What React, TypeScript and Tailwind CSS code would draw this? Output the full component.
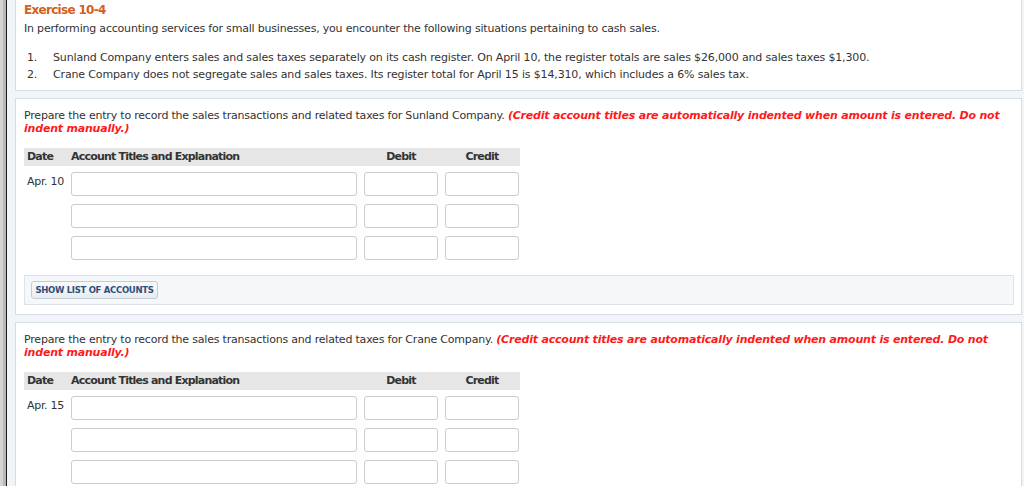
const font = "font-['DejaVu_Sans',Verdana,sans-serif]";

function EntryTable({ date }: { date: string }) {
  const rows = [0, 1, 2];
  return (
    <div className="w-[496px]">
      <div className="flex h-[18px] items-center bg-[#e6e6e6] text-[11px] font-bold text-[#333] tracking-[-0.8px]">
        <div className="w-[47px] pl-[3px]">Date</div>
        <div className="w-[286px]">Account Titles and Explanation</div>
        <div className="ml-[7px] w-[74px] text-center">Debit</div>
        <div className="ml-[7px] w-[74px] text-center">Credit</div>
      </div>
      <div className="mt-[6px] flex flex-col gap-[8px]">
        {rows.map((r) => (
          <div key={r} className="flex h-[24px]">
            <div className="w-[47px] pl-[3px] pt-[2px] text-[11px] text-[#333] tracking-[-0.3px]">
              {r === 0 ? date : ""}
            </div>
            <input className="h-[24px] w-[286px] rounded-[3px] border border-[#cccccc] bg-white" />
            <input className="ml-[7px] h-[24px] w-[74px] rounded-[3px] border border-[#cccccc] bg-white" />
            <input className="ml-[7px] h-[24px] w-[74px] rounded-[3px] border border-[#cccccc] bg-white" />
          </div>
        ))}
      </div>
    </div>
  );
}

function Instruction({ company }: { company: string }) {
  return (
    <p className="text-[11px] leading-[13px] text-[#333] tracking-[-0.2px]">
      Prepare the entry to record the sales transactions and related taxes for {company} Company.{" "}
      <span className="font-bold italic text-[#ff1a1a]">
        (Credit account titles are automatically indented when amount is entered. Do not indent manually.)
      </span>
    </p>
  );
}

export default function App() {
  return (
    <div className={`flex min-h-screen bg-[#f1f5f9] ${font}`}>
      <div className="w-[3px] bg-[#d4d4d4]" />
      <div className="w-[3px] bg-[#b8b8b8]" />
      <div className="w-[1px] bg-[#1a1a1a]" />
      <div className="flex flex-1 flex-col gap-[7px] pl-[8px] pr-[2px]">
        {/* exercise text */}
        <div className="border border-t-0 border-[#d6dde6] bg-white px-[8px] pb-[7px] pt-[3px]">
          <div className="text-[12px] font-bold leading-[14px] text-[#d4601c] tracking-[-0.7px]">Exercise 10-4</div>
          <p className="mt-[5px] text-[11px] leading-[14px] text-[#333] tracking-[-0.2px]">
            In performing accounting services for small businesses, you encounter the following situations pertaining to cash sales.
          </p>
          <ol className="mt-[13px] text-[11px] leading-[17px] text-[#333] tracking-[-0.15px]">
            <li className="flex">
              <span className="w-[29px] pl-[3px]">1.</span>
              <span>
                Sunland Company enters sales and sales taxes separately on its cash register. On April 10, the register totals are sales $26,000 and sales taxes $1,300.
              </span>
            </li>
            <li className="flex">
              <span className="w-[29px] pl-[3px]">2.</span>
              <span>
                Crane Company does not segregate sales and sales taxes. Its register total for April 15 is $14,310, which includes a 6% sales tax.
              </span>
            </li>
          </ol>
        </div>

        {/* Sunland */}
        <div className="border border-[#d6dde6] bg-white px-[8px] pb-[9px] pt-[10px]">
          <Instruction company="Sunland" />
          <div className="mt-[13px]">
            <EntryTable date="Apr. 10" />
          </div>
          <div className="mt-[15px] mr-[-1px] border border-[#dbe2ea] bg-[#f5f8fb] px-[6px] pb-[5px] pt-[5px]">
            <button className="flex h-[18px] w-[127px] items-center justify-center whitespace-nowrap rounded-[3px] border border-[#c3cbd6] bg-gradient-to-b from-[#fafafa] to-[#e9ecef] text-[8.5px] font-bold text-[#2d4e7a] tracking-[-0.3px]">
              SHOW LIST OF ACCOUNTS
            </button>
          </div>
        </div>

        {/* Crane */}
        <div className="flex-1 border border-b-0 border-[#d6dde6] bg-white px-[8px] pb-[9px] pt-[10px]">
          <Instruction company="Crane" />
          <div className="mt-[13px]">
            <EntryTable date="Apr. 15" />
          </div>
        </div>
      </div>
    </div>
  );
}
